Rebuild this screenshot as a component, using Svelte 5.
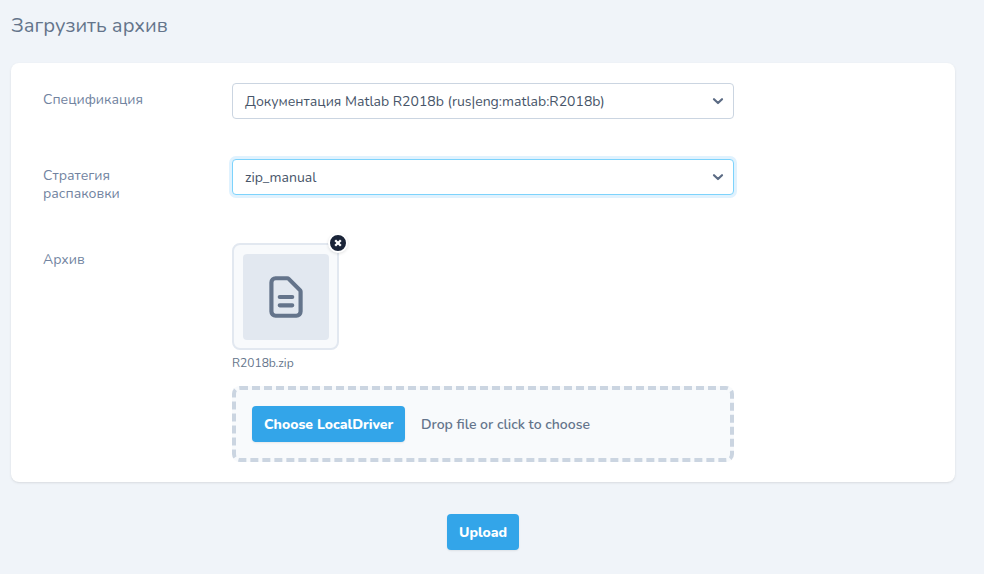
<script>
  const fields = [
    { label: 'Спецификация', value: 'Документация Matlab R2018b (rus|eng:matlab:R2018b)', focused: false },
    { label: 'Стратегия распаковки', value: 'zip_manual', focused: true }
  ];
  const fileName = 'R2018b.zip';
</script>

<main>
  <h1>Загрузить архив</h1>

  <section class="card">
    {#each fields as field}
      <div class="row">
        <div class="label">{field.label}</div>
        <button type="button" class="select" class:focused={field.focused}>
          <span>{field.value}</span>
          <svg width="12" height="8" viewBox="0 0 12 8" fill="none" stroke="#5b6b84" stroke-width="2.2" stroke-linecap="round" stroke-linejoin="round"><path d="M2 2.2 6 6 10 2.2" /></svg>
        </button>
      </div>
    {/each}

    <div class="row">
      <div class="label">Архив</div>
      <div>
        <div class="thumb">
          <div class="tile">
            <svg width="50" height="50" viewBox="0 0 24 24" fill="none" stroke="#64748b" stroke-width="2" stroke-linecap="round" stroke-linejoin="round"><path d="M9 12h6m-6 4h6m2 5H7a2 2 0 0 1-2-2V5a2 2 0 0 1 2-2h5.586a1 1 0 0 1 .707.293l5.414 5.414a1 1 0 0 1 .293.707V19a2 2 0 0 1-2 2z" /></svg>
          </div>
          <button type="button" class="remove" aria-label="Remove">
            <svg width="8" height="8" viewBox="0 0 8 8" stroke="#fff" stroke-width="2.3"><path d="m1.2 1.2 5.6 5.6m0-5.6L1.2 6.8" /></svg>
          </button>
        </div>
        <p class="name">{fileName}</p>
        <div class="dropzone">
          <button type="button" class="primary choose">Choose LocalDriver</button>
          <span class="hint">Drop file or click to choose</span>
        </div>
      </div>
    </div>
  </section>

  <footer><button type="button" class="primary">Upload</button></footer>
</main>

<style>
  :global(body) { margin: 0; background: #f0f4f9; }
  main {
    box-sizing: border-box;
    height: 574px;
    padding: 0 29px 0 11px;
    overflow: hidden;
    color: #64748b;
    font-family: Nunito, Lato, "Noto Sans", sans-serif;
    font-size: 14px;
  }
  * { box-sizing: border-box; }
  button { font: inherit; margin: 0; border: 0; }
  span { white-space: nowrap; }
  svg { display: block; flex: none; }
  h1 { margin: 0; height: 63px; padding-top: 12px; font-size: 20px; line-height: 28px; font-weight: 400; }
  .card {
    height: 419px;
    border-radius: 8px;
    background: #fff;
    box-shadow: 0 1px 3px rgba(0, 0, 0, .08), 0 1px 2px -1px rgba(0, 0, 0, .1);
  }
  .row { display: grid; grid-template-columns: 189px 502px; padding: 20px 32px; align-items: start; }
  .label { padding-top: 8px; line-height: 18px; width: 125px; color: #7183a0; }
  .select {
    display: flex;
    align-items: center;
    justify-content: space-between;
    height: 36px;
    padding: 0 9px 0 12px;
    border: 1px solid #cbd5e1;
    border-radius: 4px;
    background: #fff;
    color: #475569;
    text-align: left;
  }
  .select.focused { border-color: #7dd3fc; box-shadow: 0 0 0 3px #e0f2fe; }
  .thumb {
    position: relative;
    width: 107px;
    height: 107px;
    padding: 8.5px;
    border: 2px solid #e2e8f0;
    border-radius: 8px;
    background: #f8fafc;
  }
  .tile { display: grid; place-items: center; height: 86px; border-radius: 4px; background: #e2e8f0; }
  .remove {
    position: absolute;
    top: -12px;
    right: -11px;
    display: grid;
    place-items: center;
    width: 20px;
    height: 20px;
    padding: 0;
    border: 2px solid #fff;
    border-radius: 50%;
    background: #1a2438;
    box-shadow: 0 1px 3px rgba(0, 0, 0, .12);
  }
  .name { margin: 4px 0 0; height: 32px; font-size: 12px; line-height: 18px; }
  .dropzone {
    display: flex;
    align-items: center;
    gap: 16px;
    height: 76px;
    padding: 0 16px;
    border: 4px dashed #cbd5e1;
    border-radius: 8px;
    background: #f8fafc;
  }
  .primary {
    height: 36px;
    padding: 0 12px;
    border-radius: 4px;
    background: #33a5e9;
    color: #fff;
    font-weight: 800;
    white-space: nowrap;
    box-shadow: 0 1px 2px rgba(0, 0, 0, .08);
  }
  .choose { width: 153px; }
  .hint { font-weight: 600; }
  footer { display: flex; justify-content: center; padding-top: 32px; }
  footer .primary { width: 72px; }
</style>
